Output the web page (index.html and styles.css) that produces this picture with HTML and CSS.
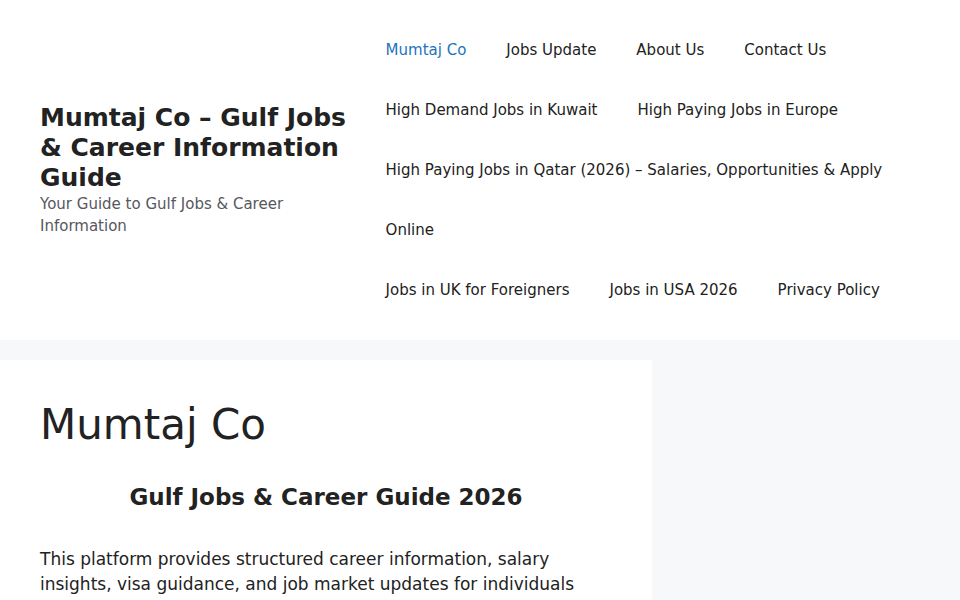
FILE: index.html
```html
<!DOCTYPE html>
<html lang="en">
<head>
    <meta charset="UTF-8">
    <meta name="viewport" content="width=device-width, initial-scale=1.0">
    <title>Mumtaj Co – Gulf Jobs &amp; Career Information Guide</title>
    <link rel="stylesheet" href="styles.css">
</head>
<body>
    <header class="site-header">
        <div class="site-branding">
            <p class="site-title"><a href="#">Mumtaj Co – Gulf Jobs &amp; Career Information Guide</a></p>
            <p class="site-description">Your Guide to Gulf Jobs &amp; Career Information</p>
        </div>

        <nav class="main-nav">
            <ul class="menu">
                <li class="current"><a href="#">Mumtaj Co</a></li>
                <li><a href="#">Jobs Update</a></li>
                <li><a href="#">About Us</a></li>
                <li><a href="#">Contact Us</a></li>
                <li><a href="#">High Demand Jobs in Kuwait</a></li>
                <li><a href="#">High Paying Jobs in Europe</a></li>
                <li><a href="#">High Paying Jobs in Qatar (2026) – Salaries, Opportunities &amp; Apply Online</a></li>
                <li><a href="#">Jobs in UK for Foreigners</a></li>
                <li><a href="#">Jobs in USA 2026</a></li>
                <li><a href="#">Privacy Policy</a></li>
            </ul>
        </nav>
    </header>

    <div class="site-content">
        <main class="content-area">
            <article class="inside-article">
                <h1 class="entry-title">Mumtaj Co</h1>
                <div class="entry-content">
                    <h2 class="centered">Gulf Jobs &amp; Career Guide 2026</h2>
                    <p>This platform provides structured career information, salary insights, visa guidance, and job market updates for individuals interested in working in the Gulf region and abroad.</p>
                </div>
            </article>
        </main>
        <aside class="sidebar"></aside>
    </div>
</body>
</html>
```

FILE: styles.css
```css
body {
    margin: 0;
    background: #f7f8f9;
    color: #222222;
    font-family: "DejaVu Sans", sans-serif;
    font-size: 17px;
    line-height: 1.5;
}

a {
    color: inherit;
    text-decoration: none;
}

p {
    margin: 0;
}

/* header */

.site-header {
    background: #ffffff;
    display: grid;
    grid-template-columns: 325.6px 1fr;
    align-items: center;
    padding: 20px 40px;
}

.site-title {
    font-size: 25px;
    font-weight: bold;
    line-height: 1.2;
}

.site-description {
    font-size: 15px;
    line-height: 1.5;
    color: #575760;
}

.menu {
    list-style: none;
    margin: 0;
    padding: 0;
    display: flex;
    flex-wrap: wrap;
}

.menu a {
    display: block;
    padding: 0 20px;
    font-size: 15px;
    line-height: 60px;
    color: #222222;
}

.menu .current a {
    color: #1e73be;
}

/* content */

.site-content {
    display: flex;
    padding-top: 20px;
}

.content-area {
    width: 652px;
    background: #ffffff;
}

.inside-article {
    padding: 40px;
}

.entry-title {
    margin: 0;
    font-size: 42px;
    font-weight: normal;
    line-height: 1.2;
}

.entry-content {
    margin-top: 34px;
}

.entry-content h2 {
    margin: 0 0 35px;
    font-size: 23px;
    line-height: 1.2;
}

.centered {
    text-align: center;
}

.entry-content p {
    margin-bottom: 1.5em;
}
```
